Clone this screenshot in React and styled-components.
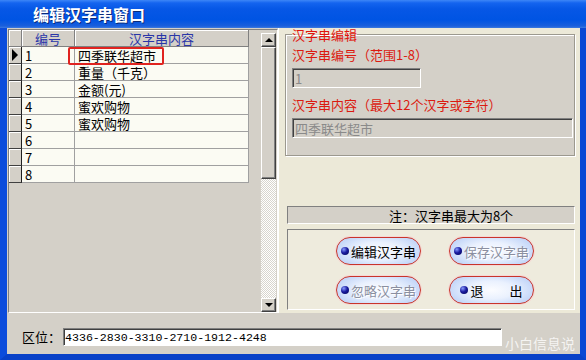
import styled, { createGlobalStyle } from "styled-components";

const CJK = `"Noto Sans CJK SC", "Liberation Sans", sans-serif`;

const GlobalStyle = createGlobalStyle`
  html, body {
    margin: 0;
    padding: 0;
    background: #0a4fd8;
  }

  body {
    width: 586px;
    height: 360px;
    overflow: hidden;
  }

  * {
    box-sizing: border-box;
  }
`;

const rows = [
  { id: 1, text: "四季联华超市", current: true },
  { id: 2, text: "重量（千克）" },
  { id: 3, text: "金额(元)" },
  { id: 4, text: "蜜欢购物" },
  { id: 5, text: "蜜欢购物" },
  { id: 6, text: "" },
  { id: 7, text: "" },
  { id: 8, text: "" },
];

const buttons = [
  { label: "编辑汉字串" },
  { label: "保存汉字串", disabled: true },
  { label: "忽略汉字串", disabled: true },
  { label: "退　　出" },
];

const Window = styled.div`
  display: flex;
  flex-direction: column;
  width: 586px;
  height: 360px;
  font-family: ${CJK};
  font-size: 13px;
`;

const TitleBar = styled.header`
  display: flex;
  flex: none;
  align-items: center;
  height: 28px;
  padding-left: 33px;
  color: #fff;
  font-size: 16px;
  font-weight: 700;
  line-height: 1;
  text-shadow: 1px 1px 0 #0a2a7a;
  background: linear-gradient(180deg, #3d86f7 0, #1464ef 3px, #0657e6 9px, #0054e3 20px, #1a5fdc 26px, #3b7ae0 28px);
`;

const Frame = styled.div`
  display: flex;
  flex: 1;
  flex-direction: column;
  min-height: 0;
  background: #d4d0c8;
  border-left: 7px solid #0b4cdc;
  border-right: 6px solid #0a47d4;
  border-bottom: 6px solid #0841c8;
`;

const TopSection = styled.div`
  display: flex;
  height: 285px;
`;

const GridBox = styled.div`
  display: flex;
  justify-content: space-between;
  width: 270px;
  height: 284px;
  margin: 1px 0 0 1px;
  background: #d4d0c8;
  border: 1px solid;
  border-color: #808080 #fff #fff #808080;
`;

const Table = styled.div`
  display: grid;
  grid-template-columns: 13px 53px 174px;
  grid-auto-rows: 17px;
  align-self: flex-start;
  width: 240px;
  line-height: 1;
`;

const HeadCell = styled.div`
  display: flex;
  align-items: center;
  justify-content: center;
  color: #2a36a8;
  background: #d4d0c8;
  border-right: 1px solid #808080;
  border-bottom: 1px solid #808080;
  box-shadow: inset 1px 1px 0 #fff;
`;

const IndicatorCell = styled.div`
  display: flex;
  align-items: center;
  padding-left: 3px;
  background: #d4d0c8;
  border-right: 1px solid #202020;
  border-bottom: 1px solid #404040;
  box-shadow: inset 1px 1px 0 #fff;
`;

const RowPointer = styled.span`
  width: 0;
  height: 0;
  border-top: 6px solid transparent;
  border-bottom: 6px solid transparent;
  border-left: 6px solid #000;
`;

const DataCell = styled.div`
  position: relative;
  display: flex;
  align-items: center;
  padding-left: 3px;
  color: #000;
  background: #fbfbf3;
  border-right: 1px solid #a0a0a0;
  border-bottom: 1px solid #a0a0a0;
`;

const Highlight = styled.span`
  position: absolute;
  top: 0;
  left: -7px;
  z-index: 1;
  width: 96px;
  height: 18px;
  border: 2px solid #e0231f;
  border-radius: 2px;
  pointer-events: none;
`;

const ScrollBar = styled.div`
  display: flex;
  flex-direction: column;
  width: 15px;
  height: 279px;
  margin: 3px 1px 0 0;
`;

const ScrollButton = styled.div`
  display: flex;
  flex: none;
  align-items: center;
  justify-content: center;
  height: ${({ $h }) => $h}px;
  background: #d4d0c8;
  border: 1px solid;
  border-color: #fff #404040 #404040 #fff;
  box-shadow: inset -1px -1px 0 #808080;
`;

const Arrow = styled.span`
  width: 0;
  height: 0;
  border-left: 4px solid transparent;
  border-right: 4px solid transparent;
  ${({ $down }) => ($down ? "border-top: 4px solid #000;" : "border-bottom: 4px solid #000;")}
`;

const Track = styled.div`
  flex: 1;
  background: repeating-conic-gradient(#fff 0 25%, #d8d5ce 0 50%) 0 0 / 2px 2px;
`;

const RightPanel = styled.section`
  display: flex;
  flex: 1;
  flex-direction: column;
  padding: 0 5px 0 6px;
  background: #ece9d8;
  border-left: 1px solid #fff;
`;

const Group = styled.fieldset`
  display: flex;
  flex-direction: column;
  align-items: flex-start;
  height: 128px;
  margin: 0;
  padding: 7px 0 0 6px;
  min-width: 0;
  background: #d4d0c8;
  border: 1px solid #9c998f;
  box-shadow: inset 1px 1px 0 #fff, 1px 1px 0 #fff;
`;

const Legend = styled.legend`
  padding: 0;
  color: #e0140c;
  font-size: 13px;
  line-height: 13px;
`;

const FieldLabel = styled.div`
  margin-top: ${({ $top }) => $top}px;
  color: #dc1a10;
  line-height: 14px;
`;

const GrayInput = styled.input`
  width: ${({ $w }) => $w}px;
  height: 20px;
  margin: 6px 0 0;
  padding: 0 2px;
  color: #8a8a8a;
  font: inherit;
  font-size: 13px;
  background: #d4d0c8;
  border: 1px solid;
  border-color: #808080 #fff #fff #808080;
  box-shadow: inset 1px 1px 0 #404040;
  outline: 0;
`;

const NoteBar = styled.div`
  display: flex;
  align-items: center;
  justify-content: center;
  height: 18px;
  margin: 50px 0 0 2px;
  padding-left: 40px;
  color: #000;
  line-height: 1;
  background: #d4d0c8;
  border: 1px solid;
  border-color: #808080 #fff #fff #808080;
`;

const ButtonPanel = styled.div`
  display: grid;
  grid-template-columns: 85px 85px;
  grid-auto-rows: 28px;
  align-content: start;
  column-gap: 28px;
  row-gap: 11px;
  height: 81px;
  margin: 5px 0 0 2px;
  padding: 7px 0 0 48px;
  background: #eeebdd;
  border: 1px solid;
  border-color: #808080 #fff #fff #808080;
`;

const PillButton = styled.button`
  display: flex;
  align-items: center;
  justify-content: center;
  gap: 1px;
  padding: 0;
  color: ${({ disabled }) => (disabled ? "#8b8fa0" : "#000")};
  font-family: ${CJK};
  font-size: 13px;
  line-height: 1;
  text-shadow: ${({ disabled }) => (disabled ? "1px 1px 0 #fff" : "none")};
  background: radial-gradient(ellipse 60% 75% at 50% 50%, #fbfcff 0%, #eaf1fe 45%, #b9cff7 100%);
  border: 1px solid #c8342c;
  border-radius: 14px;
  box-shadow: 0 0 0 1px #f6d8d4;
`;

const Bullet = styled.span`
  width: 8px;
  height: 8px;
  margin-right: 1px;
  border-radius: 50%;
  background: radial-gradient(circle at 35% 30%, #8a9cff 0, #1a1ca0 45%, #000050 100%);
`;

const BottomStrip = styled.div`
  display: flex;
  align-items: flex-start;
  height: 41px;
  padding: 15px 0 0 15px;
`;

const StripLabel = styled.span`
  margin-right: 2px;
  color: #000;
  line-height: 18px;
`;

const AddressInput = styled.input`
  width: 439px;
  height: 18px;
  margin: 0;
  padding: 0 1px;
  color: #000;
  font-family: "Liberation Mono", monospace;
  font-size: 11.6px;
  background: #fff;
  border: 1px solid;
  border-color: #808080 #fff #fff #808080;
  box-shadow: inset 1px 1px 0 #404040;
  outline: 0;
`;

const Watermark = styled.span`
  margin: 8px 0 0 3px;
  color: rgba(255, 255, 255, 0.78);
  font-size: 14px;
  line-height: 14px;
`;

export default function App() {
  return (
    <>
      <GlobalStyle />
      <Window>
        <TitleBar>编辑汉字串窗口</TitleBar>
        <Frame>
          <TopSection>
            <GridBox>
              <Table>
                <HeadCell />
                <HeadCell>编号</HeadCell>
                <HeadCell>汉字串内容</HeadCell>
                {rows.map((row) => [
                  <IndicatorCell key={`i${row.id}`}>{row.current && <RowPointer />}</IndicatorCell>,
                  <DataCell key={`n${row.id}`}>{row.id}</DataCell>,
                  <DataCell key={`t${row.id}`}>
                    {row.text}
                    {row.current && <Highlight />}
                  </DataCell>,
                ])}
              </Table>
              <ScrollBar>
                <ScrollButton $h={14}>
                  <Arrow />
                </ScrollButton>
                <ScrollButton $h={132} />
                <Track />
                <ScrollButton $h={14}>
                  <Arrow $down />
                </ScrollButton>
              </ScrollBar>
            </GridBox>

            <RightPanel>
              <Group>
                <Legend>汉字串编辑</Legend>
                <FieldLabel $top={0}>汉字串编号（范围1-8）</FieldLabel>
                <GrayInput $w={129} readOnly value="1" />
                <FieldLabel $top={10}>汉字串内容（最大12个汉字或字符）</FieldLabel>
                <GrayInput $w={281} readOnly value="四季联华超市" />
              </Group>
              <NoteBar>注：汉字串最大为8个</NoteBar>
              <ButtonPanel>
                {buttons.map((item) => (
                  <PillButton key={item.label} disabled={item.disabled}>
                    <Bullet />
                    {item.label}
                  </PillButton>
                ))}
              </ButtonPanel>
            </RightPanel>
          </TopSection>

          <BottomStrip>
            <StripLabel>区位：</StripLabel>
            <AddressInput readOnly value="4336-2830-3310-2710-1912-4248" />
            <Watermark>小白信息说</Watermark>
          </BottomStrip>
        </Frame>
      </Window>
    </>
  );
}
